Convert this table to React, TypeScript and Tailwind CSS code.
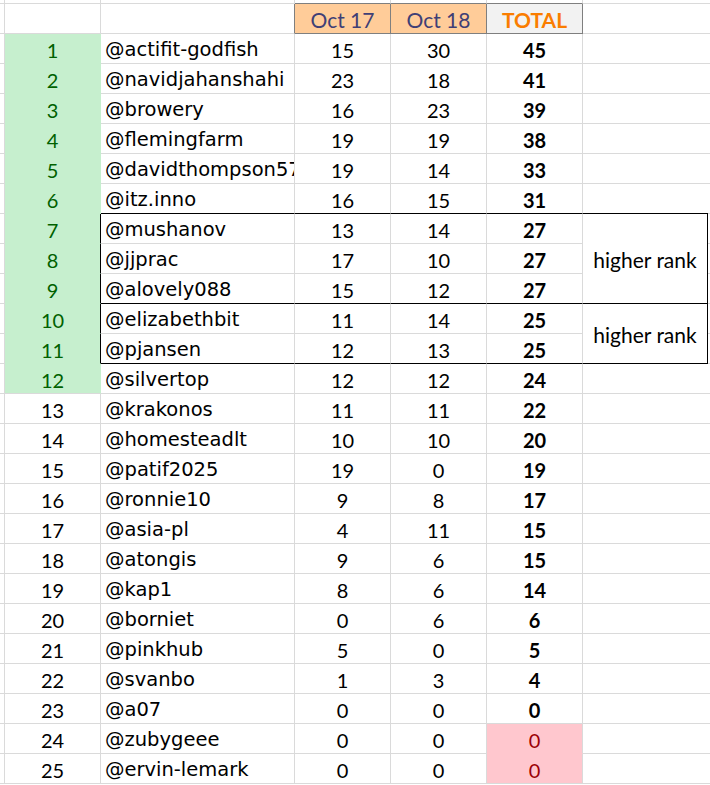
const rows: [string, number, number][] = [
  ['@actifit-godfish', 15, 30],
  ['@navidjahanshahi', 23, 18],
  ['@browery', 16, 23],
  ['@flemingfarm', 19, 19],
  ['@davidthompson57', 19, 14],
  ['@itz.inno', 16, 15],
  ['@mushanov', 13, 14],
  ['@jjprac', 17, 10],
  ['@alovely088', 15, 12],
  ['@elizabethbit', 11, 14],
  ['@pjansen', 12, 13],
  ['@silvertop', 12, 12],
  ['@krakonos', 11, 11],
  ['@homesteadlt', 10, 10],
  ['@patif2025', 19, 0],
  ['@ronnie10', 9, 8],
  ['@asia-pl', 4, 11],
  ['@atongis', 9, 6],
  ['@kap1', 8, 6],
  ['@borniet', 0, 6],
  ['@pinkhub', 5, 0],
  ['@svanbo', 1, 3],
  ['@a07', 0, 0],
  ['@zubygeee', 0, 0],
  ['@ervin-lemark', 0, 0],
]

const num = "flex items-center justify-center pt-[2px] font-['Lato',sans-serif] text-[20px]"

function Row({ n, name, a, b }: { n: number; name: string; a: number; b: number }) {
  const good = n <= 12
  const boxed = n >= 7 && n <= 11
  const bad = n >= 24
  const blackBottom = n === 6 || n === 9 || n === 11
  const bottom = blackBottom ? 'border-b-black' : 'border-b-[#dadada]'

  return (
    <>
      <div className="border-r border-b border-[#dadada]" />
      <div
        className={
          good
            ? `${num} border-r border-b bg-[#c6efce] text-[#006100] ${boxed ? 'border-r-black' : 'border-r-[#c6efce]'} ${n === 12 ? 'border-b-[#dadada]' : 'border-b-[#c6efce]'}`
            : `${num} border-r border-b border-[#dadada] text-black`
        }
      >
        {n}
      </div>
      <div
        className={`flex items-center overflow-hidden whitespace-nowrap pt-[2px] pl-1 border-r border-b border-r-[#dadada] ${bottom} font-['DejaVu_Sans',sans-serif] text-[19.5px] text-black`}
      >
        {name}
      </div>
      <div className={`${num} border-r border-b border-r-[#dadada] ${bottom} text-black`}>{a}</div>
      <div className={`${num} border-r border-b border-r-[#dadada] ${bottom} text-black`}>{b}</div>
      <div
        className={
          bad
            ? `${num} border-r border-b border-r-[#dadada] bg-[#ffc7ce] text-[#9c0006] ${n === 24 ? 'border-b-[#ffc7ce]' : 'border-b-[#dadada]'}`
            : `${num} border-r border-b border-r-[#dadada] ${bottom} font-bold text-black`
        }
      >
        {a + b}
      </div>
      {n === 7 && (
        <div className={`${num} row-span-3 border-r border-b border-black text-black text-[21px]`}>higher rank</div>
      )}
      {n === 10 && (
        <div className={`${num} row-span-2 border-r border-b border-black text-black text-[21px]`}>higher rank</div>
      )}
      {!boxed && <div className={`border-b ${bottom}`} />}
      <div className="border-b border-[#dadada]" />
    </>
  )
}

export default function App() {
  return (
    <div className="h-[785px] w-[710px] overflow-hidden bg-white">
      <div className="grid grid-cols-[5px_96px_194px_96px_96px_96px_125px_1fr] grid-rows-[4px_30px_repeat(25,30px)] [&>*]:box-border">
        {/* partial row above the header */}
        <div className="border-r border-b border-[#dadada]" />
        <div className="border-r border-b border-[#dadada]" />
        <div className="border-r border-b border-[#dadada]" />
        <div className="border-r border-b border-r-[#dadada] border-b-[#7f7f7f]" />
        <div className="border-r border-b border-r-[#dadada] border-b-[#7f7f7f]" />
        <div className="border-r border-b border-r-[#dadada] border-b-[#7f7f7f]" />
        <div className="border-b border-[#dadada]" />
        <div className="border-b border-[#dadada]" />

        {/* header */}
        <div className="border-r border-b border-[#dadada]" />
        <div className="border-r border-b border-[#dadada]" />
        <div className="border-r border-b border-r-[#7f7f7f] border-b-[#dadada]" />
        <div className={`${num} border-r border-b border-[#7f7f7f] bg-[#ffcc99] text-[#3f3f76] text-[21px]`}>Oct 17</div>
        <div className={`${num} border-r border-b border-[#7f7f7f] bg-[#ffcc99] text-[#3f3f76] text-[21px]`}>Oct 18</div>
        <div className={`${num} border-r border-b border-[#7f7f7f] bg-[#f2f2f2] font-bold text-[#fa7d00] text-[21px]`}>TOTAL</div>
        <div className="border-b border-[#dadada]" />
        <div className="border-b border-[#dadada]" />

        {rows.map(([name, a, b], i) => (
          <Row key={name} n={i + 1} name={name} a={a} b={b} />
        ))}
      </div>
    </div>
  )
}
